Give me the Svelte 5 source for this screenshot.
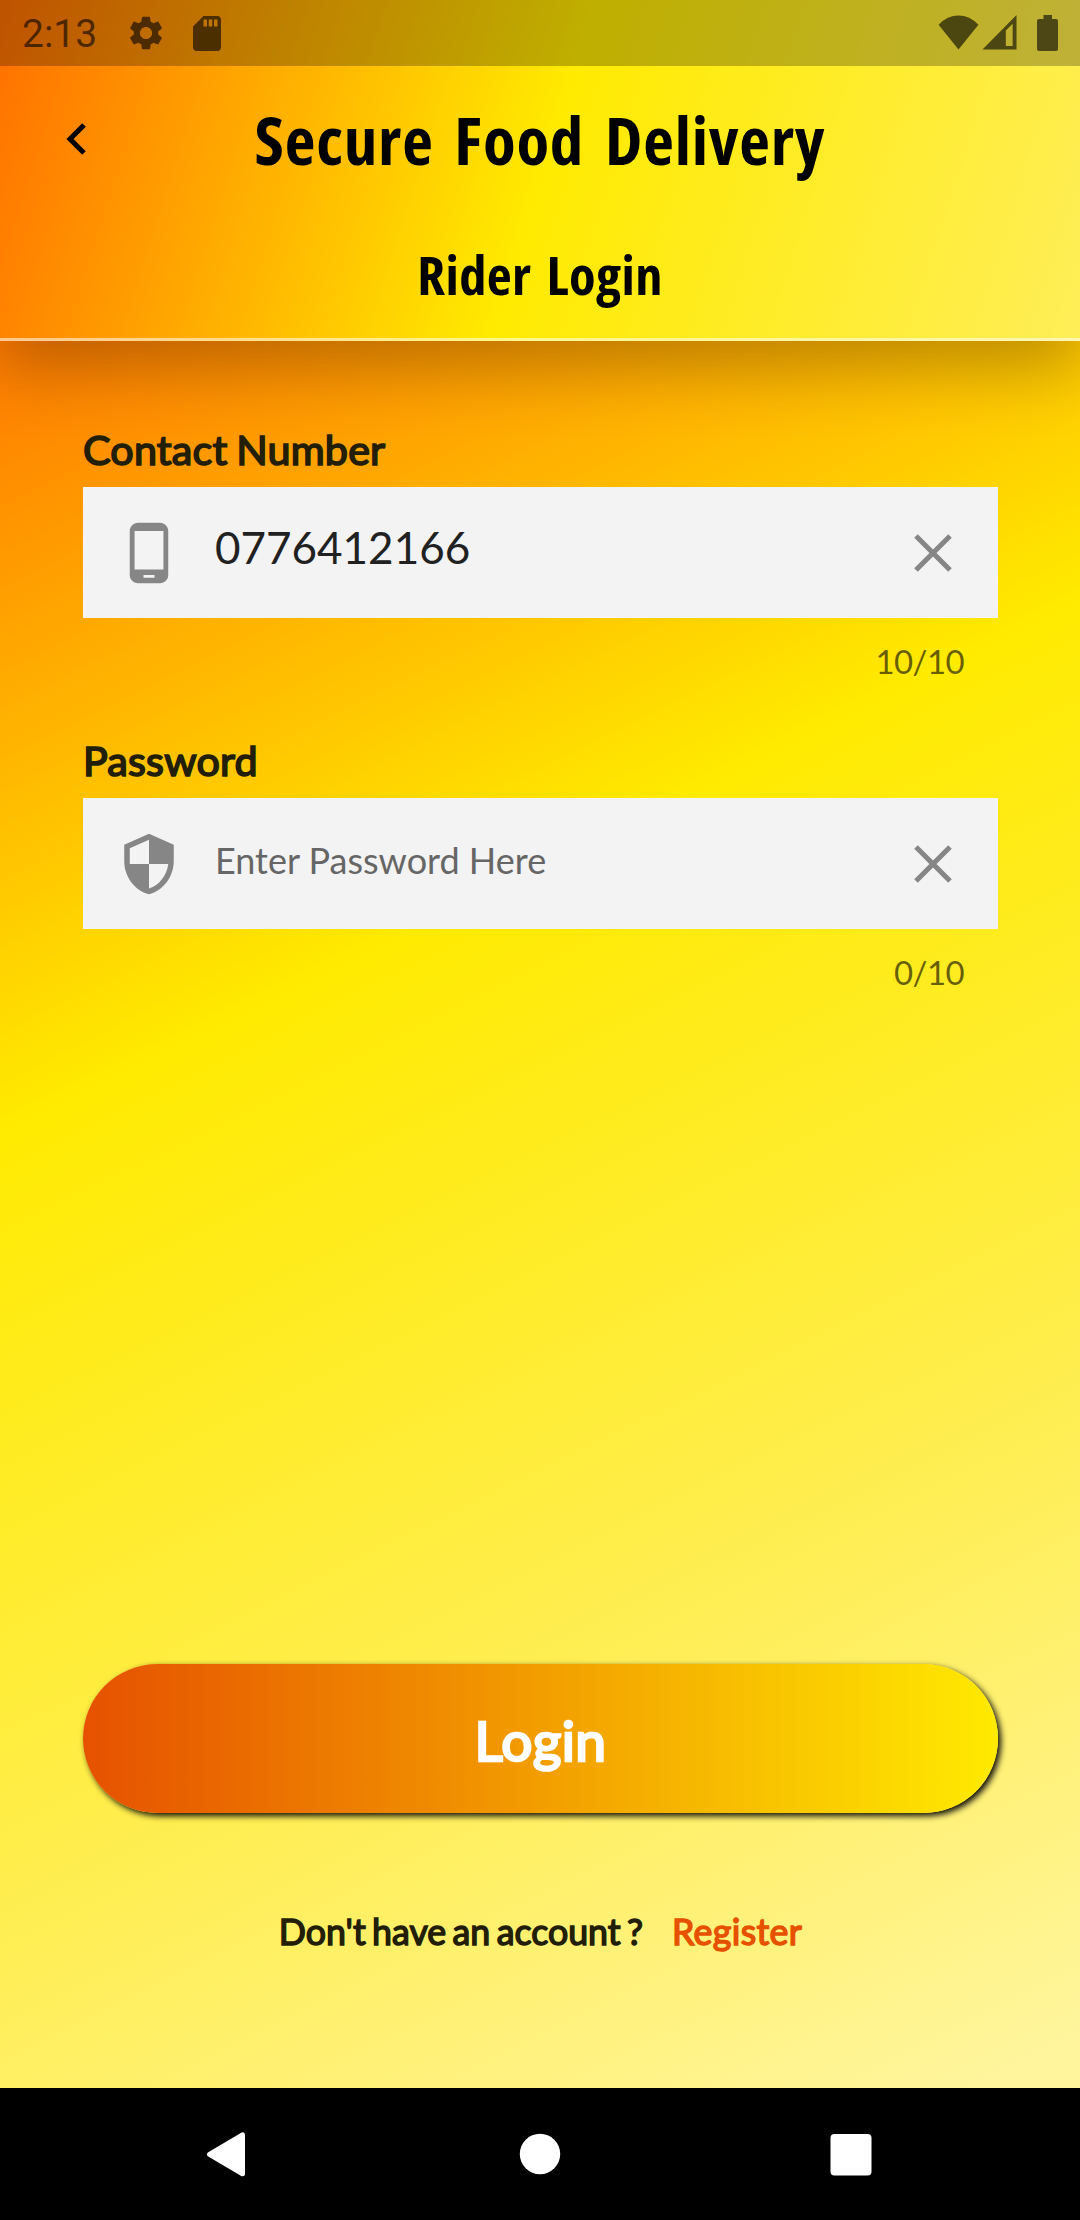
<script>
  let contact = $state('0776412166');
  let password = $state('');
</script>

<div class="screen">
  <header>
    <div class="status">
      <span class="time">2:13</span>
      <svg class="gear" viewBox="2 2 20 20"><path d="M19.14 12.94c.04-.3.06-.61.06-.94 0-.32-.02-.64-.07-.94l2.03-1.58c.18-.14.23-.41.12-.61l-1.92-3.32c-.12-.22-.37-.29-.59-.22l-2.39.96c-.5-.38-1.03-.7-1.62-.94L14.4 2.81c-.04-.24-.24-.41-.48-.41h-3.84c-.24 0-.43.17-.47.41l-.36 2.54c-.59.24-1.13.57-1.62.94l-2.39-.96c-.22-.08-.47 0-.59.22L2.74 8.87c-.12.21-.08.47.12.61l2.03 1.58c-.05.3-.09.63-.09.94s.02.64.07.94l-2.03 1.58c-.18.14-.23.41-.12.61l1.92 3.32c.12.22.37.29.59.22l2.39-.96c.5.38 1.03.7 1.62.94l.36 2.54c.05.24.24.41.48.41h3.84c.24 0 .44-.17.47-.41l.36-2.54c.59-.24 1.13-.56 1.62-.94l2.39.96c.22.08.47 0 .59-.22l1.92-3.32c.12-.22.07-.47-.12-.61l-2.01-1.58zM12 15.6c-1.98 0-3.6-1.62-3.6-3.6s1.62-3.6 3.6-3.6 3.6 1.62 3.6 3.6-1.62 3.6-3.6 3.6z"/></svg>
      <svg class="card" viewBox="4 2 16 20"><path d="M18 2h-8L4.02 8 4 20c0 1.100.9 2 2 2h12c1.100 0 2-.9 2-2V4c0-1.100-.9-2-2-2zm-6 6h-2V4h2v4zm3 0h-2V4h2v4zm3 0h-2V4h2v4z"/></svg>
      <span class="fill"></span>
      <svg class="wifi" viewBox="0 0 41 36"><path d="M20.500 35.500 0 10Q9 .5 20.500.5T41 10Z"/></svg>
      <svg class="signal" viewBox="0 0 35 36"><path fill-rule="evenodd" d="M0 35.500 35 0V35.500ZM24 16V32H31V9Z"/></svg>
      <svg class="battery" viewBox="0 0 21 36"><path d="M6.500 0h8.500v4h4a2 2 0 0 1 2 2v28a2 2 0 0 1-2 2H2a2 2 0 0 1-2-2V6a2 2 0 0 1 2-2h4.500z"/></svg>
    </div>
    <div class="bar">
      <svg class="back" viewBox="0 0 20 32"><path d="M18 2 4 16 18 30"/></svg>
      <h1>Secure Food Delivery</h1>
    </div>
    <h2>Rider Login</h2>
  </header>

  <main>
    <section>
      <label for="contact">Contact Number</label>
      <div class="field">
        <svg class="lead" viewBox="0 0 24 24"><path fill-rule="evenodd" d="M16 1H8C6.340 1 5 2.340 5 4v16c0 1.660 1.340 3 3 3h8c1.660 0 3-1.340 3-3V4c0-1.660-1.340-3-3-3zm-2 20h-4v-1h4v1zm3.250-3H6.750V4h10.500v14z"/></svg>
        <input id="contact" bind:value={contact} maxlength="10" />
        <svg class="clear" viewBox="0 0 38 38"><path d="M2 2 36 36M36 2 2 36"/></svg>
      </div>
      <p class="count">{contact.length}/10</p>
    </section>
    <section>
      <label for="password">Password</label>
      <div class="field">
        <svg class="lead" viewBox="0 0 24 24"><path d="M12 1 3 5v6c0 5.550 3.840 10.740 9 12 5.160-1.260 9-6.450 9-12V5l-9-4zm0 10.990h7c-.53 4.120-3.280 7.790-7 8.940V12H5V6.300l7-3.110v8.800z"/></svg>
        <input id="password" class="hint" bind:value={password} maxlength="10" placeholder="Enter Password Here" />
        <svg class="clear" viewBox="0 0 38 38"><path d="M2 2 36 36M36 2 2 36"/></svg>
      </div>
      <p class="count">{password.length}/10</p>
    </section>
    <div class="space"></div>
    <button>Login</button>
    <p class="join"><span>Don't have an account ?</span><a href="#register">Register</a></p>
  </main>

  <nav>
    <svg viewBox="0 0 48 48"><path class="tri" d="M4.500 24.300 37.500 4.800V43.800Z"/></svg>
    <svg viewBox="0 0 48 48"><circle cx="24" cy="24" r="20.200"/></svg>
    <svg viewBox="0 0 48 48"><rect x="3.500" y="4" width="41" height="41.500" rx="4"/></svg>
  </nav>
</div>

<style>
  :global(body) { margin: 0; }
  * { box-sizing: border-box; }
  .screen {
    width: 1080px;
    height: 2220px;
    display: flex;
    flex-direction: column;
    overflow: hidden;
    font-family: Lato, sans-serif;
    color: rgb(34, 30, 8);
    background: linear-gradient(153.800deg, #ff6f00 231px, #ffea00 1010px, #ffee58 1785px, #fff59d 2310px);
  }
  header {
    height: 341px;
    flex: none;
    border-bottom: 3px solid rgba(255, 255, 255, 0.55);
    background: linear-gradient(107.520deg, #ff6f00, #ffea00 50%, #ffee58) border-box;
    box-shadow: 0 28px 60px rgba(0, 0, 0, 0.25);
    color: #000;
  }
  .status {
    height: 66px;
    display: flex;
    align-items: flex-start;
    padding: 15px 22px 0;
    background: rgba(0, 0, 0, 0.25);
  }
  .status svg { fill: rgba(0, 0, 0, 0.6); }
  .time {
    width: 107px;
    font: 39px/39px Roboto, sans-serif;
    color: rgba(0, 0, 0, 0.6);
  }
  .gear { width: 34px; height: 36px; }
  .card { width: 28px; height: 35px; margin: 1px 0 0 30px; }
  .fill { flex: 1; }
  .wifi { width: 41px; height: 35px; }
  .signal { width: 35px; height: 35px; margin-left: 3px; }
  .battery { width: 21px; height: 36px; margin-left: 20px; }
  .bar {
    height: 146px;
    display: grid;
    grid-template-columns: 1fr auto 1fr;
    align-items: center;
    padding: 0 66px;
  }
  .back {
    width: 20px;
    height: 32px;
    fill: none;
    stroke: #000;
    stroke-width: 5;
  }
  h1, h2 {
    margin: 0;
    text-align: center;
    font-family: "Open Sans", sans-serif;
    font-weight: 700;
    font-stretch: 75%;
    white-space: nowrap;
  }
  h1 { font-size: 67px; line-height: 74px; letter-spacing: 0.800px; word-spacing: 8px; }
  h2 { font-size: 54.500px; line-height: 60px; margin-top: 32px; letter-spacing: 0.400px; word-spacing: 5px; }
  main {
    flex: 1;
    display: flex;
    flex-direction: column;
    padding: 85px 82px 0 83px;
  }
  section { height: 311px; }
  label {
    display: block;
    height: 61px;
    font-size: 41.250px;
    line-height: 46px;
    letter-spacing: 0.200px;
    word-spacing: -2px;
    -webkit-text-stroke: 1.700px;
  }
  .field {
    height: 131px;
    display: flex;
    align-items: center;
    padding: 0 46px 0 33px;
    background: #f3f3f3;
  }
  .lead { width: 66px; height: 66px; fill: #868686; }
  .clear { width: 38px; height: 38px; stroke: #868686; stroke-width: 5; }
  input {
    flex: 1;
    min-width: 0;
    height: 66px;
    margin: 0;
    padding: 0 0 12px 33px;
    border: 0;
    outline: 0;
    background: none;
    font: 44px Lato, sans-serif;
    color: #212121;
  }
  input.hint { font-size: 36px; padding-bottom: 7px; }
  input::placeholder { color: #666; opacity: 1; }
  .count {
    margin: 22px 34px 0 0;
    text-align: right;
    font-size: 33px;
    line-height: 42px;
    letter-spacing: -0.600px;
    color: rgba(0, 0, 0, 0.6);
  }
  .space { height: 616px; }
  button {
    height: 149px;
    flex: none;
    padding: 2px 0 0;
    border: 0;
    border-radius: 75px;
    background: linear-gradient(90deg, #e65100, #ffea00);
    box-shadow: 3px 3px 6px rgba(0, 0, 0, 0.95);
    font: 55px Lato, sans-serif;
    letter-spacing: 0.400px;
    -webkit-text-stroke: 2.600px;
    color: #fff;
  }
  .join {
    display: flex;
    justify-content: center;
    gap: 29px;
    margin: 97px 0 0;
    font-size: 35.750px;
    line-height: 44px;
    white-space: nowrap;
    word-spacing: -2.800px;
    -webkit-text-stroke: 1.500px;
  }
  .join a { color: #e65100; text-decoration: none; letter-spacing: 0.350px; }
  nav {
    height: 132px;
    flex: none;
    display: flex;
    align-items: center;
    justify-content: space-between;
    padding: 0 205px 0 205px;
    background: #000;
  }
  nav svg { width: 48px; height: 48px; fill: #fff; }
  .tri { stroke: #fff; stroke-width: 5; stroke-linejoin: round; }
</style>
